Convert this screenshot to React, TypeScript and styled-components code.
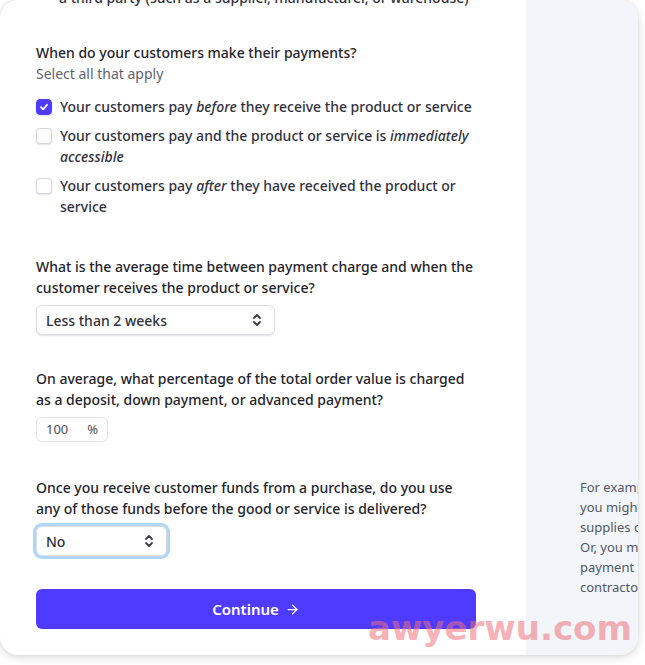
import styled, { createGlobalStyle } from "styled-components";
import { ArrowRight } from "lucide-react";

const GlobalStyle = createGlobalStyle`
  html, body {
    margin: 0;
    padding: 0;
    background: #ffffff;
  }
  body {
    font-family: "Noto Sans", "Open Sans", sans-serif;
    color: #30313d;
  }
`;

const accent = "#4f3bff";

type Choice = {
  id: string
  checked: boolean
  before: string
  em: string
  after: string
}

const choices: Choice[] = [
  { id: "before", checked: true, before: "Your customers pay ", em: "before", after: " they receive the product or service" },
  { id: "now", checked: false, before: "Your customers pay and the product or service is ", em: "immediately accessible", after: "" },
  { id: "after", checked: false, before: "Your customers pay ", em: "after", after: " they have received the product or service" },
];

const sideLines = ["For example,", "you might buy", "supplies or", "Or, you might", "payment to a", "contractor"];

function UpDown() {
  return (
    <svg width="10" height="14" viewBox="0 0 10 14" fill="none" stroke="#3c3c48" strokeWidth="1.8" strokeLinecap="round" strokeLinejoin="round">
      <path d="M2 5 L5 2 L8 5" />
      <path d="M2 9 L5 12 L8 9" />
    </svg>
  );
}

function Check() {
  return (
    <svg width="10" height="10" viewBox="0 0 10 10" fill="none" stroke="#fff" strokeWidth="1.8" strokeLinecap="round" strokeLinejoin="round">
      <path d="M2 5.2 L4.2 7.3 L8 2.8" />
    </svg>
  );
}

export default function App() {
  return (
    <>
      <GlobalStyle />
      <Page>
        <Card>
          <Main>
            <Overflow>a third party (such as a supplier, manufacturer, or warehouse)</Overflow>

            <Question $top={34}>
              <Label>When do your customers make their payments?</Label>
              <Hint>Select all that apply</Hint>
              <Choices>
                {choices.map((c) => (
                  <ChoiceRow key={c.id}>
                    <Box $checked={c.checked}>{c.checked && <Check />}</Box>
                    <span>
                      {c.before}
                      <em>{c.em}</em>
                      {c.after}
                    </span>
                  </ChoiceRow>
                ))}
              </Choices>
            </Question>

            <Question $top={39}>
              <Label>What is the average time between payment charge and when the customer receives the product or service?</Label>
              <Select $width={239}>
                <span>Less than 2 weeks</span>
                <UpDown />
              </Select>
            </Question>

            <Question $top={33}>
              <Label>On average, what percentage of the total order value is charged as a deposit, down payment, or advanced payment?</Label>
              <Percent>
                <span>100</span>
                <span>%</span>
              </Percent>
            </Question>

            <Question $top={35}>
              <Label>Once you receive customer funds from a purchase, do you use any of those funds before the good or service is delivered?</Label>
              <Select $width={131} $focused>
                <span>No</span>
                <UpDown />
              </Select>
            </Question>

            <Continue>
              Continue
              <ArrowRight size={15} strokeWidth={2} />
            </Continue>
          </Main>

          <Aside>
            {sideLines.map((l) => (
              <div key={l}>{l}</div>
            ))}
          </Aside>
        </Card>
        <Watermark>awyerwu.com</Watermark>
      </Page>
    </>
  );
}

const Page = styled.div`
  position: relative;
  width: 645px;
  height: 665px;
  padding: 0 7px 10px 0;
  box-sizing: border-box;
  overflow: hidden;
`;

const Card = styled.div`
  display: grid;
  grid-template-columns: 526px 1fr;
  height: 655px;
  border-radius: 18px;
  overflow: hidden;
  background: #fff;
  box-shadow: 0 2px 8px rgba(0, 0, 0, 0.16), 0 0 2px rgba(0, 0, 0, 0.08);
`;

const Main = styled.div`
  padding: 0 46px 0 36px;
  font-size: 14px;
  line-height: 21px;
`;

const Overflow = styled.div`
  margin: -13px 0 0 23px;
  font-weight: 500;
  color: #30313d;
  white-space: nowrap;
`;

const Question = styled.section<{ $top: number }>`
  margin-top: ${(p) => p.$top}px;
  display: flex;
  flex-direction: column;
  align-items: flex-start;
`;

const Label = styled.div`
  font-weight: 500;
  color: #24242c;
  margin-bottom: 7px;
`;

const Hint = styled.div`
  color: #5f6370;
  margin-top: -7px;
  margin-bottom: 12px;
`;

const Choices = styled.div`
  display: flex;
  flex-direction: column;
  gap: 8px;
`;

const ChoiceRow = styled.label`
  display: flex;
  gap: 8px;
  align-items: flex-start;
  font-weight: 500;
  color: #30313d;

  em {
    font-style: italic;
  }
`;

const Box = styled.span<{ $checked: boolean }>`
  flex: none;
  width: 16px;
  height: 16px;
  margin-top: 3px;
  border-radius: 4px;
  display: flex;
  align-items: center;
  justify-content: center;
  box-sizing: border-box;
  background: ${(p) => (p.$checked ? accent : "#fff")};
  border: 1px solid ${(p) => (p.$checked ? accent : "#d5d7de")};
  box-shadow: 0 1px 2px rgba(0, 0, 0, 0.12);
`;

const Select = styled.div<{ $width: number; $focused?: boolean }>`
  width: ${(p) => p.$width}px;
  height: 30px;
  box-sizing: border-box;
  padding: 0 12px 0 9px;
  display: flex;
  align-items: center;
  justify-content: space-between;
  border-radius: 6px;
  background: #fff;
  font-weight: 500;
  color: #30313d;
  border: 1px solid #dcdee4;
  box-shadow: ${(p) =>
    p.$focused
      ? "0 0 0 3px rgba(110, 180, 240, 0.55)"
      : "0 1px 2px rgba(0, 0, 0, 0.12)"};
`;

const Percent = styled.div`
  width: 72px;
  height: 25px;
  box-sizing: border-box;
  padding: 0 9px;
  display: flex;
  align-items: center;
  justify-content: space-between;
  border: 1px solid #e1e3e8;
  border-radius: 6px;
  font-size: 13px;
  color: #4a4d5a;
`;

const Continue = styled.button`
  margin-top: 33px;
  width: 440px;
  height: 40px;
  border: none;
  border-radius: 6px;
  background: ${accent};
  color: #fff;
  font-family: inherit;
  font-size: 15px;
  font-weight: 600;
  display: flex;
  align-items: center;
  justify-content: center;
  gap: 6px;
`;

const Aside = styled.div`
  background: #f2f5f9;
  padding: 477px 0 0 54px;
  font-size: 13px;
  line-height: 20px;
  color: #545766;
  white-space: nowrap;
  overflow: hidden;
`;

const Watermark = styled.div`
  position: absolute;
  left: 368px;
  top: 608px;
  font-family: "DejaVu Sans", sans-serif;
  font-size: 34px;
  font-weight: bold;
  color: rgba(240, 110, 120, 0.55);
  pointer-events: none;
`;
